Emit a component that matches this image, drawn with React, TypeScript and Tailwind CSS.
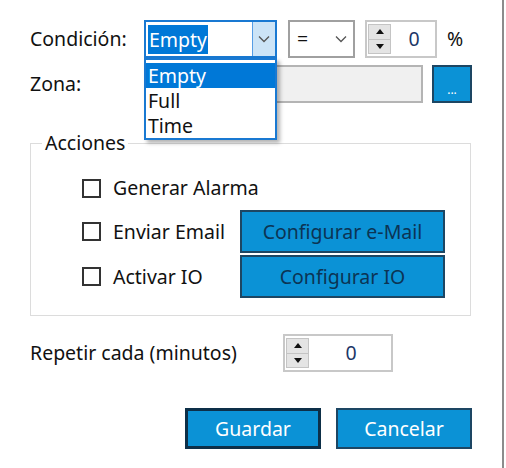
import { useState } from 'react';

const font = { fontFamily: '"Noto Sans", "Open Sans", sans-serif' };

function Chevron({ className }: { className?: string }) {
    return (
        <svg width="12" height="8" viewBox="0 0 12 8" className={className}>
            <path d="M1 1.5 L6 6.5 L11 1.5" fill="none" stroke="#555" strokeWidth="1.3" />
        </svg>
    );
}

function Spinner({ value, width }: { value: string; width: string }) {
    return (
        <div className={`h-[38px] ${width} border-2 border-[#c8c8c8] bg-white flex items-center pl-[1px]`}>
            <div className="flex flex-col w-[23px] h-[30px] border border-[#c4c4c4]">
                <div className="flex-1 bg-[#e4e4e4] border-b border-[#c4c4c4] flex items-center justify-center">
                    <svg width="8" height="5" viewBox="0 0 8 5"><path d="M0 5 L4 0 L8 5 Z" fill="#111" /></svg>
                </div>
                <div className="flex-1 bg-[#e4e4e4] flex items-center justify-center">
                    <svg width="8" height="5" viewBox="0 0 8 5"><path d="M0 0 L4 5 L8 0 Z" fill="#111" /></svg>
                </div>
            </div>
            <div className="flex-1 text-center text-[#1c3766] pl-[2px]">{value}</div>
        </div>
    );
}

function Check({ label }: { label: string }) {
    const [on, setOn] = useState(false);
    return (
        <label className="flex items-center gap-[12px] cursor-default" onClick={() => setOn(!on)}>
            <span className="w-[19px] h-[19px] border-2 border-[#333] bg-white flex items-center justify-center text-[13px] leading-none">
                {on ? '✓' : ''}
            </span>
            <span>{label}</span>
        </label>
    );
}

export default function App() {
    const opciones = ['Empty', 'Full', 'Time'];

    return (
        <div className="w-[506px] h-[468px] bg-white text-[19.5px] text-[#111]" style={font}>
            <div className="w-[504px] h-full border-r-2 border-[#8c8c8c] relative pt-[20px] pl-[30px]">
                {/* Condición */}
                <div className="flex items-center h-[38px]">
                    <div className="w-[114px]">Condición:</div>
                    <div className="relative">
                        <div className="w-[133px] h-[38px] border-2 border-[#1979d2] bg-white flex">
                            <div className="flex-1 flex items-center pl-[2px]">
                                <span className="bg-[#0078d7] text-white px-[1px] leading-[29px]">Empty</span>
                            </div>
                            <div className="w-[23px] bg-[#cce4f7] border-l border-[#569de5] flex items-center justify-center">
                                <Chevron />
                            </div>
                        </div>
                        {/* lista desplegada */}
                        <div className="absolute left-0 top-[38px] w-[133px] h-[82px] border-2 border-[#1979d2] bg-white shadow-[3px_3px_4px_rgba(0,0,0,0.3)] z-10 pt-[3px]">
                            {opciones.map((o, i) => (
                                <div
                                    key={o}
                                    className={`h-[25px] leading-[25px] pl-[2px] ${i === 0 ? 'bg-[#0078d7] text-white' : ''}`}
                                >
                                    {o}
                                </div>
                            ))}
                        </div>
                    </div>
                    <div className="ml-[11px] w-[67px] h-[38px] border-2 border-[#a0a0a0] bg-white flex items-center justify-between pl-[7px] pr-[6px]">
                        <span>=</span>
                        <Chevron />
                    </div>
                    <div className="ml-[10px]">
                        <Spinner value="0" width="w-[72px]" />
                    </div>
                    <div className="ml-[10px]">%</div>
                </div>

                {/* Zona */}
                <div className="flex items-center h-[38px] mt-[7px]">
                    <div className="w-[114px]">Zona:</div>
                    <div className="w-[279px] h-[38px] border-2 border-[#b4b4b4] bg-[#f0f0f0]" />
                    <button className="ml-[9px] w-[40px] h-[38px] bg-[#0b92d6] border-2 border-[#1d4663] text-white text-[12px] leading-none pt-[12px]">
                        ...
                    </button>
                </div>

                {/* Acciones */}
                <fieldset className="mt-[28px] w-[441px] h-[185px] border border-[#dcdcdc]">
                    <legend className="ml-[11px] px-[3px] leading-[24px]">Acciones</legend>
                    <div className="pl-[51px]">
                        <div className="mt-[21px] h-[24px] flex items-center">
                            <Check label="Generar Alarma" />
                        </div>
                        <div className="mt-[10px] flex items-center">
                            <div className="w-[158px]"><Check label="Enviar Email" /></div>
                            <button className="w-[205px] h-[43px] bg-[#0b92d6] border-2 border-[#1d4663] text-[#0c3454]">
                                Configurar e-Mail
                            </button>
                        </div>
                        <div className="mt-[2px] flex items-center">
                            <div className="w-[158px]"><Check label="Activar IO" /></div>
                            <button className="w-[205px] h-[43px] bg-[#0b92d6] border-2 border-[#1d4663] text-[#0c3454]">
                                Configurar IO
                            </button>
                        </div>
                    </div>
                </fieldset>

                {/* Repetir */}
                <div className="mt-[18px] flex items-center h-[38px]">
                    <div className="w-[253px]">Repetir cada (minutos)</div>
                    <Spinner value="0" width="w-[110px]" />
                </div>

                {/* Botones */}
                <div className="mt-[36px] flex gap-[15px] pl-[155px]">
                    <button className="w-[136px] h-[41px] bg-[#0b92d6] border-[3px] border-[#0d2f48] text-white">
                        Guardar
                    </button>
                    <button className="w-[136px] h-[41px] bg-[#0b92d6] border-2 border-[#1d4663] text-white">
                        Cancelar
                    </button>
                </div>
            </div>
        </div>
    );
}
